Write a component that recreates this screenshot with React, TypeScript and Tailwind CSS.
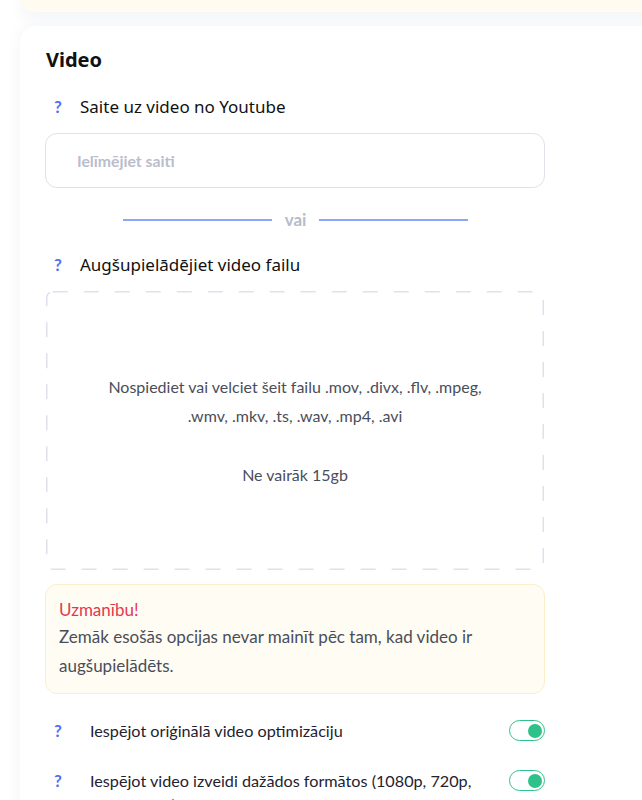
import { useState } from 'react'

const HEAD_FONT = "font-['Noto_Sans',sans-serif]"
const BODY_FONT = "font-['Lato',sans-serif]"

const HelpMark = () => (
    <span className={`${BODY_FONT} w-[24px] shrink-0 text-center text-[17px] font-bold leading-[24px] text-[#4d6ef5]`}>?</span>
)

const Toggle = ({ on, onChange }: { on: boolean; onChange: () => void }) => (
    <button
        type="button"
        onClick={onChange}
        className={`flex h-[21px] w-[36px] shrink-0 items-center rounded-full border-[1.5px] border-[#2ec28a] bg-white px-[2.5px] ${
            on ? 'justify-end' : 'justify-start'
        }`}
    >
        <span className="h-[14px] w-[14px] rounded-full bg-[#2ec28a]" />
    </button>
)

const OptionRow = ({ label, on, onChange }: { label: string; on: boolean; onChange: () => void }) => (
    <div className="flex items-start">
        <HelpMark />
        <span className={`${BODY_FONT} ml-[20px] w-[388px] text-[16.2px] leading-[24px] text-[#1f2230]`}>{label}</span>
        <div className="ml-auto pt-[1px]">
            <Toggle on={on} onChange={onChange} />
        </div>
    </div>
)

export default function App() {
    const [link, setLink] = useState('')
    const [optimize, setOptimize] = useState(true)
    const [formats, setFormats] = useState(true)

    return (
        <div className="h-[800px] w-[642px] overflow-hidden bg-white">
            <div className="ml-[20px] h-[12px] w-[640px] rounded-bl-[16px] bg-[#fffbf0] shadow-[0_4px_14px_rgba(100,116,160,0.1)]" />

            <div className="ml-[20px] mt-[14px] w-[640px] rounded-tl-[16px] bg-white px-[26px] pt-[20px] shadow-[0_0_14px_rgba(100,116,160,0.08)]">
                <div className="w-[499px]">
                    <h2 className={`${HEAD_FONT} text-[20px] font-bold leading-[28px] text-[#111]`}>Video</h2>

                    <div className="mt-[21px] flex items-center">
                        <HelpMark />
                        <span className={`${HEAD_FONT} ml-[10px] text-[17px] leading-[24px] text-[#111]`}>
                            Saite uz video no Youtube
                        </span>
                    </div>

                    <input
                        value={link}
                        onChange={(e) => setLink(e.target.value)}
                        placeholder="Ielīmējiet saiti"
                        className={`${BODY_FONT} mt-[14px] -ml-[1px] block h-[55px] w-[500px] rounded-[12px] border border-[#e1e0ef] px-[31px] text-[15.8px] font-bold text-[#333] outline-none placeholder:text-[#b9bdcc]`}
                    />

                    <div className="mt-[20px] flex h-[24px] items-center justify-center gap-[13px]">
                        <span className="h-[2px] w-[149px] bg-[#8ea6f7]" />
                        <span className={`${BODY_FONT} text-[17px] font-bold leading-[24px] text-[#b4bccb]`}>vai</span>
                        <span className="h-[2px] w-[149px] bg-[#8ea6f7]" />
                    </div>

                    <div className="mt-[21px] flex items-center">
                        <HelpMark />
                        <span className={`${HEAD_FONT} ml-[10px] text-[17px] leading-[24px] text-[#111]`}>
                            Augšupielādējiet video failu
                        </span>
                    </div>

                    <div className="relative mt-[14px] flex h-[279px] w-[498px] flex-col items-center justify-center text-center">
                        <svg className="pointer-events-none absolute inset-0" width="498" height="279">
                            <rect
                                x="0.75"
                                y="0.75"
                                width="496.5"
                                height="277.5"
                                rx="6"
                                fill="none"
                                stroke="#e2e0ee"
                                strokeWidth="1.5"
                                strokeDasharray="15 16"
                            />
                        </svg>
                        <p className={`${BODY_FONT} w-[390px] text-[16px] leading-[29px] text-[#4a4e5a]`}>
                            Nospiediet vai velciet šeit failu .mov, .divx, .flv, .mpeg, .wmv, .mkv, .ts, .wav, .mp4, .avi
                        </p>
                        <p className={`${BODY_FONT} mt-[30px] text-[16px] leading-[29px] text-[#4a4e5a]`}>Ne vairāk 15gb</p>
                    </div>

                    <div className="mt-[14px] -ml-[1px] w-[500px] rounded-[12px] border border-[#fbefc9] bg-[#fffcf3] px-[13px] pb-[13px] pt-[13px]">
                        <p className={`${BODY_FONT} text-[17px] leading-[24px] text-[#e5384f]`}>Uzmanību!</p>
                        <p className={`${BODY_FONT} text-[17px] leading-[29px] text-[#4a4e5a]`}>
                            Zemāk esošās opcijas nevar mainīt pēc tam, kad video ir augšupielādēts.
                        </p>
                    </div>

                    <div className="mt-[25px] flex flex-col gap-[26px]">
                        <OptionRow
                            label="Iespējot oriģinālā video optimizāciju"
                            on={optimize}
                            onChange={() => setOptimize(!optimize)}
                        />
                        <OptionRow
                            label="Iespējot video izveidi dažādos formātos (1080p, 720p, 480p, 360p)"
                            on={formats}
                            onChange={() => setFormats(!formats)}
                        />
                    </div>
                </div>
            </div>
        </div>
    )
}
